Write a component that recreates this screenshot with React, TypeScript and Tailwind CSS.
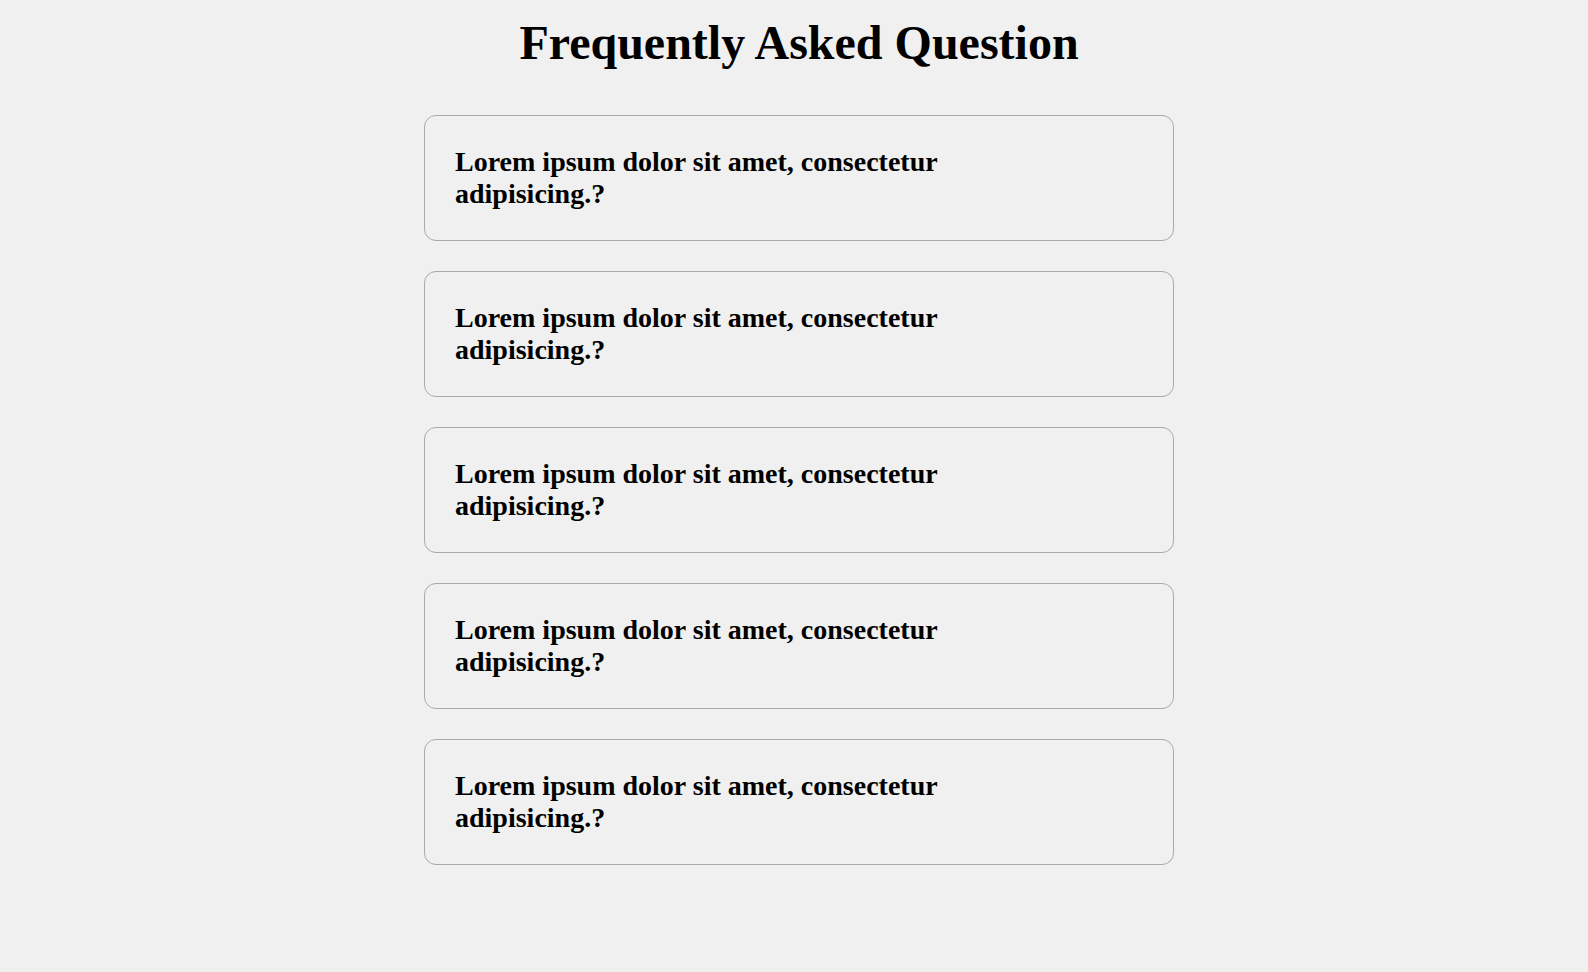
const questions = [1, 2, 3, 4, 5];

export default function App() {
  return (
    <main
      className="min-h-screen bg-[#f0f0f0] pl-[10px] text-black"
      style={{ fontFamily: '"Liberation Serif", "Times New Roman", serif' }}
    >
      <h1 className="pt-[16px] text-center text-[48px] font-bold leading-[53px]">
        Frequently Asked Question
      </h1>

      <section className="mx-auto mt-[46px] flex w-[750px] flex-col gap-[30px]">
        {questions.map((q) => (
          <div
            key={q}
            className="rounded-[12px] border border-[#a8a8a8] px-[30px] py-[30px]"
          >
            <h3 className="max-w-[540px] text-[28px] font-bold leading-[32px]">
              Lorem ipsum dolor sit amet, consectetur adipisicing.?
            </h3>
          </div>
        ))}
      </section>
    </main>
  );
}
